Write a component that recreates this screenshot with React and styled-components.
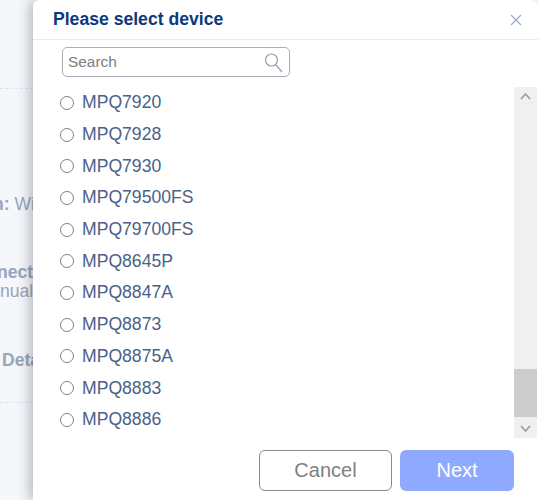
import React from "react";
import styled, { createGlobalStyle } from "styled-components";

const GlobalStyle = createGlobalStyle`
  html, body {
    margin: 0;
    padding: 0;
    width: 538px;
    height: 500px;
    overflow: hidden;
    background: #f6f7fb;
    font-family: "Liberation Sans", Arial, sans-serif;
  }
`;

const Page = styled.div`
  position: relative;
  width: 538px;
  height: 500px;
  overflow: hidden;
  background: #f6f7fb;
`;

const BackColumn = styled.div`
  width: 33px;
  height: 500px;
  overflow: hidden;
  padding-top: 88px;
  box-sizing: border-box;
`;

const Dashes = styled.div`
  width: 33px;
  border-top: 1px dashed #dfe3ea;
  margin-bottom: ${p => p.$after}px;
`;

const BackLine = styled.div`
  white-space: nowrap;
  font-size: 17.6px;
  line-height: 19px;
  color: #98a5bb;
  font-weight: ${p => (p.$bold ? 700 : 400)};
  margin-left: ${p => p.$shift}px;
  margin-bottom: ${p => p.$after}px;
`;

const BackValue = styled.span`
  font-weight: 400;
`;

const Dialog = styled.div`
  position: absolute;
  left: 33px;
  top: 0;
  width: 505px;
  height: 500px;
  display: flex;
  flex-direction: column;
  background: #fff;
  border-radius: 6px 6px 0 0;
  box-shadow: -4px 0 12px rgba(40, 50, 70, 0.3);
`;

const DialogHeader = styled.div`
  height: 39px;
  flex: none;
  display: flex;
  align-items: center;
  justify-content: space-between;
  padding: 0 16px 0 20px;
  border-bottom: 1px solid #e8ebf1;
`;

const Title = styled.h1`
  margin: 0;
  font-size: 17.6px;
  font-weight: 700;
  color: #0b3a7e;
`;

const CloseIcon = styled.svg`
  width: 12px;
  height: 12px;
  stroke: #9aaac2;
  stroke-width: 1.3;
  fill: none;
`;

const SearchBar = styled.div`
  width: 228px;
  height: 30px;
  margin: 7px 0 0 29px;
  flex: none;
  box-sizing: border-box;
  display: flex;
  align-items: center;
  justify-content: space-between;
  padding: 0 6px 0 5px;
  border: 1.5px solid #a9adb8;
  border-radius: 5px;
`;

const SearchInput = styled.input`
  border: none;
  outline: none;
  padding: 0;
  width: 180px;
  font: 15.4px "Liberation Sans", Arial, sans-serif;
  color: #666;
  &::placeholder {
    color: #7d7d7d;
    opacity: 1;
  }
`;

const SearchIcon = styled.svg`
  width: 19px;
  height: 21px;
  stroke: #9a9da5;
  stroke-width: 1.2;
  fill: none;
`;

const ListArea = styled.div`
  flex: none;
  height: 351px;
  margin-top: 10px;
  display: flex;
  justify-content: space-between;
`;

const DeviceList = styled.div`
  padding: 0 0 0 27px;
`;

const DeviceRow = styled.label`
  display: flex;
  align-items: center;
  height: 31.7px;
  gap: 8px;
  font-size: 17.6px;
  color: #4a6288;
`;

const RadioDot = styled.span`
  width: 12px;
  height: 12px;
  border: 1.5px solid #7b7f87;
  border-radius: 50%;
  background: #fff;
`;

const Scrollbar = styled.div`
  width: 23px;
  margin-right: 1px;
  background: #f0f0f0;
  display: flex;
  flex-direction: column;
  justify-content: flex-end;
  align-items: center;
  position: relative;
`;

const Arrow = styled.svg`
  position: absolute;
  left: 6px;
  top: ${p => p.$top}px;
  width: 11px;
  height: 7px;
  stroke: #9a9a9a;
  stroke-width: 1.6;
  fill: none;
`;

const Thumb = styled.div`
  width: 100%;
  height: 48px;
  margin-bottom: 21px;
  background: #cdcdcd;
`;

const Footer = styled.div`
  display: flex;
  gap: 8px;
  margin: 12px 0 0 226px;
`;

const Button = styled.button`
  width: ${p => (p.$primary ? 114 : 133)}px;
  height: 41px;
  box-sizing: border-box;
  border-radius: 6px;
  font: 20px "Liberation Sans", Arial, sans-serif;
  border: ${p => (p.$primary ? "none" : "1.5px solid #8a8a8a")};
  background: ${p => (p.$primary ? "#8fa9ff" : "#fff")};
  color: ${p => (p.$primary ? "#fff" : "#7f7f7f")};
`;

const devices = [
  "MPQ7920",
  "MPQ7928",
  "MPQ7930",
  "MPQ79500FS",
  "MPQ79700FS",
  "MPQ8645P",
  "MPQ8847A",
  "MPQ8873",
  "MPQ8875A",
  "MPQ8883",
  "MPQ8886",
];

const App = () => {
  return (
    <Page>
      <GlobalStyle />
      <BackColumn>
        <Dashes $after={106} />
        <BackLine $bold $shift={-7} $after={49}>
          n: <BackValue>Wi</BackValue>
        </BackLine>
        <BackLine $bold $shift={-3} $after={0}>
          nect
        </BackLine>
        <BackLine $shift={0} $after={50}>
          nual
        </BackLine>
        <BackLine $bold $shift={2} $after={32}>
          Detail
        </BackLine>
        <Dashes $after={0} />
      </BackColumn>
      <Dialog>
        <DialogHeader>
          <Title>Please select device</Title>
          <CloseIcon viewBox="0 0 12 12">
            <path d="M1 1 L11 11 M11 1 L1 11" />
          </CloseIcon>
        </DialogHeader>
        <SearchBar>
          <SearchInput placeholder="Search" />
          <SearchIcon viewBox="0 0 19 21">
            <circle cx="7.5" cy="8" r="6" />
            <path d="M12 13 L18 20" />
          </SearchIcon>
        </SearchBar>
        <ListArea>
          <DeviceList>
            {devices.map(name => (
              <DeviceRow key={name}>
                <RadioDot />
                {name}
              </DeviceRow>
            ))}
          </DeviceList>
          <Scrollbar>
            <Arrow $top={6} viewBox="0 0 11 7">
              <path d="M1 6 L5.5 1 L10 6" />
            </Arrow>
            <Arrow $top={338} viewBox="0 0 11 7">
              <path d="M1 1 L5.5 6 L10 1" />
            </Arrow>
            <Thumb />
          </Scrollbar>
        </ListArea>
        <Footer>
          <Button>Cancel</Button>
          <Button $primary>Next</Button>
        </Footer>
      </Dialog>
    </Page>
  );
};

export default App;
